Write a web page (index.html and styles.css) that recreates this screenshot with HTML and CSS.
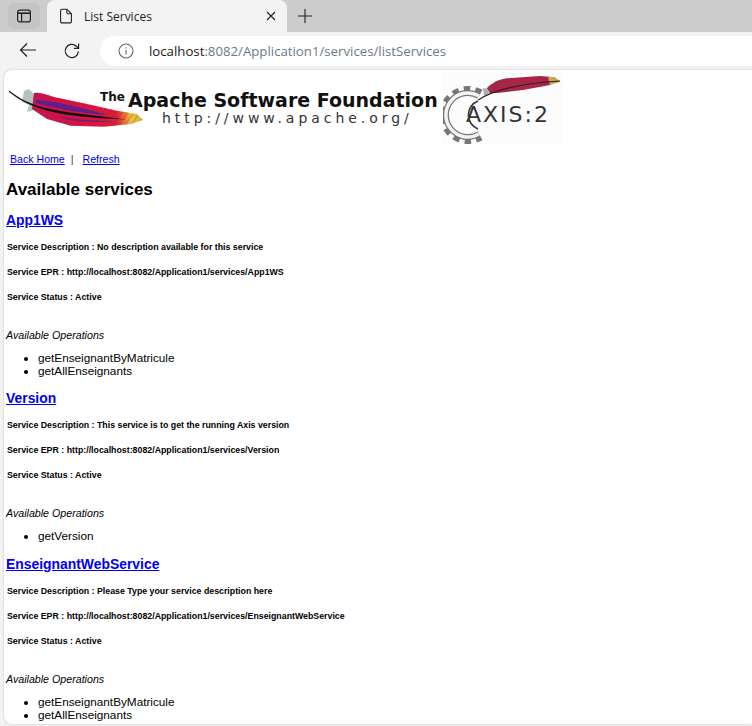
FILE: index.html
```html
<!DOCTYPE html>
<html lang="en">
<head>
    <meta charset="UTF-8">
    <title>List Services</title>
    <link rel="stylesheet" href="styles.css">
</head>
<body>
    <div class="tabstrip">
        <div class="sidebar-btn">
            <svg width="16" height="16" viewBox="0 0 16 16" fill="none" stroke="#222" stroke-width="1.2">
                <rect x="1.6" y="2.1" width="12.8" height="11.8" rx="2.2"/>
                <path d="M1.8 5.2h12.4" stroke-width="1.6"/>
                <path d="M5.6 5.2v8.6"/>
            </svg>
        </div>
        <div class="tab">
            <svg class="tab-icon" width="14" height="16" viewBox="0 0 14 16" fill="none" stroke="#222" stroke-width="1.1">
                <path d="M1.6 2.6a1.4 1.4 0 0 1 1.4-1.4h4.9l4.5 4.6v7.7a1.4 1.4 0 0 1-1.4 1.4H3a1.4 1.4 0 0 1-1.4-1.4z"/>
                <path d="M7.8 1.4v3.2a1.2 1.2 0 0 0 1.2 1.2h3.2"/>
            </svg>
            <span class="tab-title">List Services</span>
            <svg class="tab-close" width="10" height="10" viewBox="0 0 10 10" stroke="#222" stroke-width="1.1">
                <path d="M1 1l8 8M9 1l-8 8"/>
            </svg>
        </div>
        <svg class="new-tab" width="16" height="16" viewBox="0 0 16 16" stroke="#222" stroke-width="1.1">
            <path d="M8 1v14M1 8h14"/>
        </svg>
    </div>

    <div class="toolbar">
        <svg class="tool-back" width="18" height="16" viewBox="0 0 18 16" fill="none" stroke="#222" stroke-width="1.2">
            <path d="M17 8H1.5M8 1.5L1.5 8 8 14.5"/>
        </svg>
        <svg class="tool-reload" width="18" height="18" viewBox="0 0 18 18" fill="none" stroke="#222" stroke-width="1.2">
            <path d="M15.4 9.4a6.6 6.6 0 1 1-2-5.2l2 1.9"/>
            <path d="M15.6 1.6v4.7h-4.7"/>
        </svg>
        <div class="address">
            <svg class="info" width="16" height="16" viewBox="0 0 16 16" fill="none" stroke="#666" stroke-width="1.1">
                <circle cx="8" cy="8" r="7"/>
                <path d="M8 7v4.6M8 4.2v1.4"/>
            </svg>
            <span class="url"><span class="host">localhost</span>:8082/Application1/services/listServices</span>
        </div>
    </div>

    <div class="content">
        <div class="logos">
            <svg class="logo-apache" width="436" height="72" viewBox="0 0 436 72">
                <defs>
                    <linearGradient id="feather" x1="0" y1="0" x2="1" y2="0">
                        <stop offset="0" stop-color="#c8144e"/>
                        <stop offset="0.45" stop-color="#d81340"/>
                        <stop offset="0.76" stop-color="#dc1f38"/>
                        <stop offset="0.84" stop-color="#e8782e"/>
                        <stop offset="0.89" stop-color="#e3c244"/>
                        <stop offset="1" stop-color="#d8b83e"/>
                    </linearGradient>
                    <pattern id="barbs" width="5" height="6" patternUnits="userSpaceOnUse" patternTransform="rotate(35)">
                        <path d="M0 0v6" stroke="#8f1250" stroke-width="1" opacity="0.55"/>
                    </pattern>
                </defs>
                <path d="M15 19l5-2 5 5v16l-7 2 2-7-7-3z" fill="#b6c2c2"/>
                <path d="M25 21C32 20 38 23 45 25L78 32 108 38.7 128 42 134 48 122 52 95 54.7 61.7 53.7 38 47 23 37z" fill="url(#feather)"/>
                <path d="M25 21C32 20 38 23 45 25L78 32 108 38.7 128 42 134 48 122 52 95 54.7 61.7 53.7 38 47 23 37z" fill="url(#barbs)"/>
                <path d="M27 28C44 29 72 35 98 43 76 42 50 37 27 31z" fill="#5e1f8c"/>
                <path d="M50 44C70 48 90 49 106 49 90 51 70 50 56 47z" fill="#7a1f70"/>
                <path d="M0 18.5C5 22 10 26 15 28.2 25 33 35 36 45 37.8 60 41 90 44 118 47.6 90 46.5 60 44 44 40 30 37 12 30 0 20z" fill="#111"/>
                <text class="logo-the" x="91" y="29">The</text>
                <text class="logo-name" x="119" y="35">Apache Software Foundation</text>
                <text class="logo-url" x="153" y="51">http://www.apache.org/</text>
            </svg>
            <svg class="logo-axis" width="122" height="73" viewBox="0 0 122 73">
                <rect width="120" height="73" fill="#fcfcfc"/>
                <path class="gear-teeth" d="M37.5 21.3A25 25 0 1 0 37.5 64.7"/>
                <path class="gear-ring" d="M36 24A22 22 0 1 0 36 62"/>
                <path class="gear-hollow" d="M36 24A22 22 0 1 0 36 62"/>
                <path class="gear-inner" d="M35 29A15 15 0 0 0 35 57"/>
                <path d="M43.7 16.3C50 10 56 7.5 63.7 6.3L97 4 112 5.3 107 13 80 18 57 20.7 47 21.3z" fill="#a82548"/>
                <path d="M105 4.7L112 5.3 117.7 9.7 107 13z" fill="#c9ab56"/>
                <path d="M40 16l5 1 1 5-5 2z" fill="#aab0b2"/>
                <path d="M35.3 28C50 18 80 11 117 9" fill="none" stroke="#222" stroke-width="1.2"/>
                <text class="logo-axis-text" x="23" y="50">AXIS:2</text>
            </svg>
        </div>
        <div class="nav-links">
            <a href="#">Back Home</a>
            <span class="sep">|</span>
            <a href="#">Refresh</a>
        </div>
        <h1>Available services</h1>

        <h2><a href="#">App1WS</a></h2>
        <p class="info-line">Service Description : No description available for this service</p>
        <p class="info-line">Service EPR : http://localhost:8082/Application1/services/App1WS</p>
        <p class="info-line">Service Status : Active</p>
        <p class="ops-title">Available Operations</p>
        <ul>
            <li>getEnseignantByMatricule</li>
            <li>getAllEnseignants</li>
        </ul>

        <h2><a href="#">Version</a></h2>
        <p class="info-line">Service Description : This service is to get the running Axis version</p>
        <p class="info-line">Service EPR : http://localhost:8082/Application1/services/Version</p>
        <p class="info-line">Service Status : Active</p>
        <p class="ops-title">Available Operations</p>
        <ul>
            <li>getVersion</li>
        </ul>

        <h2><a href="#">EnseignantWebService</a></h2>
        <p class="info-line">Service Description : Please Type your service description here</p>
        <p class="info-line">Service EPR : http://localhost:8082/Application1/services/EnseignantWebService</p>
        <p class="info-line">Service Status : Active</p>
        <p class="ops-title">Available Operations</p>
        <ul>
            <li>getEnseignantByMatricule</li>
            <li>getAllEnseignants</li>
        </ul>
    </div>
</body>
</html>
```

FILE: styles.css
```css
* {
    margin: 0;
    padding: 0;
    box-sizing: border-box;
}

html, body {
    height: 726px;
    overflow: hidden;
}

body {
    background-color: #f3f3f3;
    font-family: "Liberation Sans", Arial, sans-serif;
    display: flex;
    flex-direction: column;
}

.tabstrip {
    height: 32px;
    background-color: #cccccc;
    display: flex;
    align-items: flex-end;
    flex-shrink: 0;
}

.sidebar-btn {
    width: 32px;
    height: 26px;
    margin: 0 0 3px 8px;
    border-radius: 5px;
    background-color: #c4c4c4;
    display: flex;
    align-items: center;
    justify-content: center;
}

.tab {
    width: 240px;
    height: 32px;
    margin-left: 7px;
    padding: 0 11px 0 12px;
    background-color: #f3f3f3;
    border-radius: 8px 8px 0 0;
    display: flex;
    align-items: center;
}

.tab-title {
    font-family: "Open Sans", sans-serif;
    font-size: 12px;
    color: #222;
    margin-left: 11px;
    flex: 1;
}

.new-tab {
    margin: 0 0 8px 10px;
}

.toolbar {
    height: 36px;
    padding-top: 2px;
    display: flex;
    align-items: center;
    flex-shrink: 0;
}

.tool-back {
    margin: 0 0 2px 19px;
}

.tool-reload {
    margin-left: 26px;
}

.address {
    height: 30px;
    margin-left: 19px;
    flex: 1;
    background-color: #fff;
    border-radius: 15px 0 0 15px;
    display: flex;
    align-items: center;
    padding-left: 18px;
}

.url {
    font-family: "Open Sans", sans-serif;
    font-size: 13.23px;
    color: #6c7a86;
    margin-left: 15px;
}

.host {
    color: #1a1a1a;
}

.content {
    margin: 2px 0 2px 4px;
    flex: 1;
    background-color: #fff;
    border-radius: 8px 0 0 8px;
    box-shadow: 0 0 2px rgba(0, 0, 0, 0.25);
    padding: 0 2px;
    overflow: hidden;
}

.logos {
    display: flex;
    align-items: flex-start;
    height: 72px;
    margin: 2px 0 0 3px;
}

.logo-axis {
    margin-left: -2px;
    flex-shrink: 0;
}

.logo-apache {
    flex-shrink: 0;
}

.logo-the {
    font: bold 12px "DejaVu Sans", sans-serif;
    fill: #111;
}

.logo-name {
    font: bold 19px "DejaVu Sans", sans-serif;
    fill: #111;
}

.logo-url {
    font: 14px "DejaVu Sans", sans-serif;
    letter-spacing: 3.95px;
    fill: #333;
}

.logo-axis-text {
    font: 22px "DejaVu Sans", sans-serif;
    letter-spacing: 2px;
    fill: #333;
}

.gear-teeth {
    fill: none;
    stroke: #777;
    stroke-width: 8;
    stroke-dasharray: 6 5;
}

.gear-ring {
    fill: none;
    stroke: #777;
    stroke-width: 6;
}

.gear-hollow {
    fill: none;
    stroke: #f4f4f4;
    stroke-width: 3.5;
}

.gear-inner {
    fill: none;
    stroke: #333;
    stroke-width: 1.6;
}

.nav-links {
    font-size: 10.6px;
    margin: 9px 0 0 4px;
    line-height: 12px;
    display: flex;
    gap: 6px;
}

.sep {
    color: #2a3a66;
    margin-right: 3px;
}

a {
    color: #0000ee;
}

h1 {
    font-size: 17px;
    line-height: 18px;
    margin: 16px 0 13px;
}

h2 {
    font-size: 13.9px;
    line-height: 16px;
    margin-top: 12.8px;
}

.info-line {
    font-size: 8.8px;
    font-weight: bold;
    line-height: 11px;
    margin: 14px 0 0 1px;
}

.ops-title {
    font-size: 10.67px;
    font-style: italic;
    line-height: 13px;
    margin-top: 26px;
}

ul {
    list-style: disc;
    font-size: 11.75px;
    line-height: 13px;
    margin: 9px 0 0 32px;
    padding-bottom: 0.5px;
}
```
